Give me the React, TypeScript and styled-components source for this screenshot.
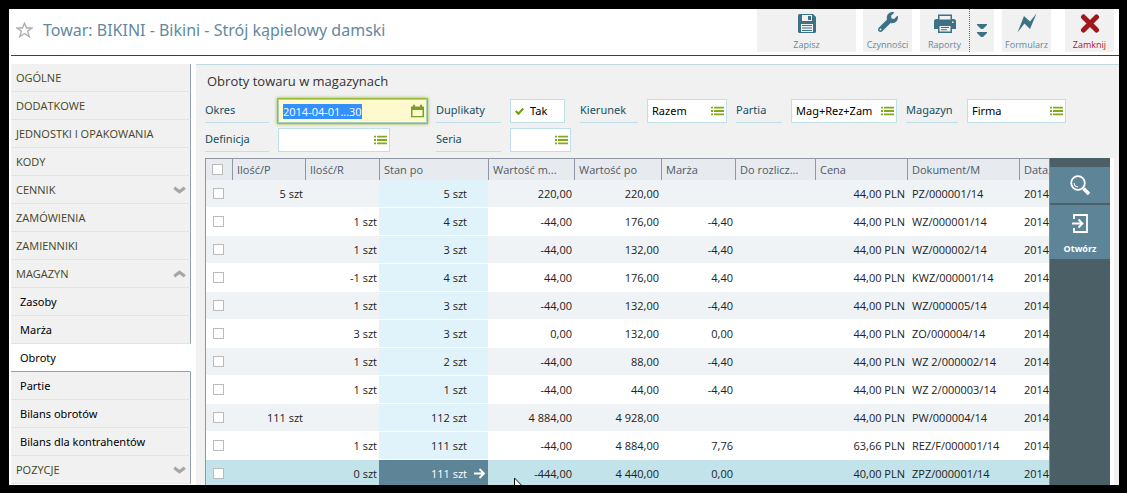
import React, { useEffect, useRef } from 'react';
import styled, { createGlobalStyle, css } from 'styled-components';
import { FaWrench } from 'react-icons/fa';

const GlobalStyle = createGlobalStyle`
  *, *::before, *::after { box-sizing: border-box; }
  body {
    margin: 0;
    background: #000;
    color: #222;
    font: 11px/16px 'Noto Sans', 'Open Sans', sans-serif;
  }
  button, input, select { font: inherit; color: inherit; margin: 0; }
`;

const Frame = styled.div`
  height: 100vh;
  padding: 9px 8px 8px 9px;
  background: #000;
`;

const Window = styled.div`
  display: flex;
  flex-direction: column;
  height: 100%;
  padding-left: 2px;
  background: #fff;
  overflow: hidden;
`;

const Header = styled.header`
  display: flex;
  flex: none;
  align-items: flex-start;
  justify-content: space-between;
  height: 47px;
  padding-right: 5px;
  border-bottom: 1px solid #44441f;
`;

const Heading = styled.div`
  display: flex;
  align-items: center;
  gap: 10px;
  height: 42px;
  padding-left: 5px;
`;

const Title = styled.h1`
  margin: 0;
  color: #6389a0;
  font-size: 16px;
  font-weight: 400;
  line-height: 24px;
  white-space: nowrap;
`;

const IconButton = styled.button`
  display: flex;
  padding: 0;
  border: 0;
  background: none;
`;

const Toolbar = styled.div`
  display: flex;
  height: 43px;
`;

const ToolButton = styled.button<{ $width?: number; $gap?: number; $danger?: boolean; $split?: boolean }>`
  display: flex;
  flex-direction: column;
  align-items: center;
  justify-content: space-between;
  width: ${(p) => p.$width ?? 49}px;
  margin-left: ${(p) => p.$gap ?? 0}px;
  padding: 3px 0 0;
  border: 0;
  border-left: ${(p) => (p.$split ? '1px dotted #3c7186' : '0')};
  background: #f1f1f1;
  color: ${(p) => (p.$danger ? '#b5121b' : '#6389a0')};
  font-family: 'Open Sans', sans-serif;
  font-size: 9px;
  line-height: 14px;
  ${(p) => p.$split && css`justify-content: center; padding-top: 0;`}
`;

const Body = styled.div`
  display: flex;
  flex: 1;
  gap: 5px;
  min-height: 0;
  padding-top: 8px;
`;

const Sidebar = styled.nav`
  flex: none;
  width: 180px;
  overflow: hidden;
`;

const NavLink = styled.a<{ $sub?: boolean; $active?: boolean }>`
  display: flex;
  align-items: center;
  justify-content: space-between;
  height: 28px;
  padding: 0 4px 0 ${(p) => (p.$sub ? 9 : 5)}px;
  border-right: 1px solid ${(p) => (p.$active ? '#fff' : '#94a2a8')};
  border-bottom: 1px solid ${(p) => (p.$active ? '#94a2a8' : '#e4e4e4')};
  background: ${(p) => (p.$active ? '#fff' : '#f1f1f1')};
  color: ${(p) => (p.$sub ? '#000' : '#44441f')};
  font-family: ${(p) => (p.$sub ? 'inherit' : "'Open Sans', sans-serif")};
  text-decoration: none;
`;

const Main = styled.main`
  display: flex;
  flex: 1;
  flex-direction: column;
  min-width: 0;
  padding: 7px 5px 0 9px;
  border-top: 1px solid #c0dae2;
  background: #f1f1f1;
`;

const SectionTitle = styled.h2`
  margin: 0 0 9px 2px;
  color: #333;
  font-family: 'Open Sans', sans-serif;
  font-size: 13px;
  font-weight: 400;
  line-height: 18px;
`;

const Filters = styled.form`
  display: grid;
  grid-template-columns: 64px 149px 65px 61px 58px 80px 46px 106px 52px 99px;
  grid-auto-rows: 24px;
  gap: 5px 9px;
`;

const FilterLabel = styled.label<{ $start?: boolean }>`
  padding-top: 3px;
  border-bottom: 1px solid #bfe0e6;
  color: #145062;
  white-space: nowrap;
  ${(p) => p.$start && css`grid-column-start: 1;`}
`;

const Field = styled.div<{ $width?: number }>`
  position: relative;
  width: ${(p) => (p.$width ? `${p.$width}px` : '100%')};
  color: #000;
`;

const FieldIcon = styled.span`
  position: absolute;
  top: 50%;
  right: 3px;
  display: flex;
  transform: translateY(-50%);
  pointer-events: none;
`;

const Select = styled.select`
  width: 100%;
  height: 24px;
  padding: 0 18px 0 4px;
  border: 1px solid #bfe0e6;
  border-radius: 0;
  outline: 0;
  background: #fff;
  appearance: none;
`;

const DateInput = styled.input`
  width: 100%;
  height: 24px;
  padding: 0 18px 0 4px;
  border: 1px solid #a6cfc0;
  outline: 1px solid #9cbd3c;
  box-shadow: 0 0 3px 1px #8fb42c;
  background: #fff9d0;
  font-family: 'Open Sans', sans-serif;
  &::selection { background: #3390ff; color: #fff; }
`;

const Toggle = styled.label`
  display: flex;
  align-items: center;
  gap: 6px;
  width: 55px;
  padding-left: 4px;
  border: 1px solid #bfe0e6;
  background: #fff;
  color: #000;
`;

const ToggleBox = styled.span`
  position: relative;
  display: flex;
  width: 9px;
  height: 9px;
`;

const ToggleInput = styled.input`
  width: 9px;
  height: 9px;
  appearance: none;
  & + svg { position: absolute; inset: 0; visibility: hidden; pointer-events: none; }
  &:checked + svg { visibility: visible; }
`;

const Content = styled.div`
  display: flex;
  flex: 1;
  min-height: 0;
  margin-top: 6px;
  padding-right: 4px;
  background: #fff;
`;

const TableArea = styled.div`
  flex: 1;
  min-width: 0;
  overflow: hidden;
  border-left: 1px solid #9096a4;
  font-family: 'Open Sans', sans-serif;
`;

const Table = styled.table`
  width: 100%;
  table-layout: fixed;
  border-collapse: separate;
  border-spacing: 0;
`;

const HeadCell = styled.th`
  height: 22px;
  padding: 0 0 0 4px;
  border-top: 1px solid #9096a4;
  border-left: 1px solid #9096a4;
  background: #e7eaef;
  color: #4f5a63;
  font-weight: 400;
  text-align: left;
  overflow: hidden;
  text-overflow: ellipsis;
  white-space: nowrap;
  &:first-child { border-left: 0; }
  &:last-child { text-overflow: clip; }
`;

const Row = styled.tr<{ $selected?: boolean }>`
  background: ${(p) => (p.$selected ? '#c2e3ea' : '#fff')};
  ${(p) => !p.$selected && css`&:nth-child(odd) { background: #eff3f6; }`}
`;

const Cell = styled.td<{ $text?: boolean }>`
  position: relative;
  height: 28px;
  padding: 0 2px 0 ${(p) => (p.$text ? 5 : 0)}px;
  border-bottom: 1px solid #fff;
  text-align: ${(p) => (p.$text ? 'left' : 'right')};
  white-space: nowrap;
`;

const StockCell = styled(Cell)<{ $selected?: boolean }>`
  padding-right: 21px;
  background: ${(p) => (p.$selected ? '#5e8497' : '#e0f3fb')};
  color: ${(p) => (p.$selected ? '#fff' : 'inherit')};
`;

const OpenArrow = styled.svg`
  position: absolute;
  top: 8px;
  right: 2px;
`;

const Pointer = styled.svg`
  position: absolute;
  top: 17px;
  left: 26px;
`;

const Tick = styled.input`
  display: block;
  width: 11px;
  height: 11px;
  border: 1px solid #bbb;
  background: #fff;
  appearance: none;
`;

const TickCell = styled(Cell)`
  padding: 0 0 0 7px;
`;

const TickHead = styled(HeadCell)`
  padding-left: 6px;
`;

const SidePanel = styled.aside`
  display: flex;
  flex: none;
  flex-direction: column;
  gap: 2px;
  width: 61px;
  padding-top: 9px;
  border-left: 1px solid #7d8f97;
  background: #4b5f66;
`;

const SideButton = styled.button<{ $tall?: boolean }>`
  display: flex;
  flex-direction: column;
  align-items: center;
  justify-content: ${(p) => (p.$tall ? 'flex-end' : 'center')};
  gap: 9px;
  height: ${(p) => (p.$tall ? 54 : 36)}px;
  padding: 0 0 ${(p) => (p.$tall ? 3 : 0)}px;
  border: 0;
  background: #5e8497;
  color: #fff;
  font-family: 'Open Sans', sans-serif;
  font-size: 9px;
  font-weight: 700;
  line-height: 14px;
`;

const ListIcon = () => (
  <svg width="13" height="9" viewBox="0 0 13 9" fill="#82a91b" aria-hidden="true">
    <path d="M0 0h2v2H0zM3 0h10v2H3zM0 3.5h2v2H0zM3 3.5h10v2H3zM0 7h2v2H0zM3 7h10v2H3z" />
  </svg>
);

const Chevron = ({ up }: { up?: boolean }) => (
  <svg width="13" height="8" viewBox="0 0 13 8" fill="none" stroke="#a6a6a6" strokeWidth="3" aria-hidden="true">
    <path d={up ? 'M1.200 6.200 6.500 2.200 11.800 6.200' : 'M1.200 1.800 6.500 5.800 11.800 1.800'} />
  </svg>
);

type NavItem = { label: string; sub?: boolean; active?: boolean; arrow?: 'up' | 'down' };

const navItems: NavItem[] = [
  { label: 'OGÓLNE' },
  { label: 'DODATKOWE' },
  { label: 'JEDNOSTKI I OPAKOWANIA' },
  { label: 'KODY' },
  { label: 'CENNIK', arrow: 'down' },
  { label: 'ZAMÓWIENIA' },
  { label: 'ZAMIENNIKI' },
  { label: 'MAGAZYN', arrow: 'up' },
  { label: 'Zasoby', sub: true },
  { label: 'Marża', sub: true },
  { label: 'Obroty', sub: true, active: true },
  { label: 'Partie', sub: true },
  { label: 'Bilans obrotów', sub: true },
  { label: 'Bilans dla kontrahentów', sub: true },
  { label: 'POZYCJE', arrow: 'down' },
];

const columns = [
  { label: 'Ilość/P', width: 73 },
  { label: 'Ilość/R', width: 74 },
  { label: 'Stan po', width: 109 },
  { label: 'Wartość m...', width: 86 },
  { label: 'Wartość po', width: 87 },
  { label: 'Marża', width: 74 },
  { label: 'Do rozlicz...', width: 80 },
  { label: 'Cena', width: 92 },
  { label: 'Dokument/M', width: 112 },
  { label: 'Data,', width: 0 },
];

// in, out, stock after, value, value after, margin, price, document
const rows: string[][] = [
  ['5 szt', '', '5 szt', '220,00', '220,00', '', '44,00 PLN', 'PZ/000001/14'],
  ['', '1 szt', '4 szt', '-44,00', '176,00', '-4,40', '44,00 PLN', 'WZ/000001/14'],
  ['', '1 szt', '3 szt', '-44,00', '132,00', '-4,40', '44,00 PLN', 'WZ/000002/14'],
  ['', '-1 szt', '4 szt', '44,00', '176,00', '4,40', '44,00 PLN', 'KWZ/000001/14'],
  ['', '1 szt', '3 szt', '-44,00', '132,00', '-4,40', '44,00 PLN', 'WZ/000005/14'],
  ['', '3 szt', '3 szt', '0,00', '132,00', '0,00', '44,00 PLN', 'ZO/000004/14'],
  ['', '1 szt', '2 szt', '-44,00', '88,00', '-4,40', '44,00 PLN', 'WZ 2/000002/14'],
  ['', '1 szt', '1 szt', '-44,00', '44,00', '-4,40', '44,00 PLN', 'WZ 2/000003/14'],
  ['111 szt', '', '112 szt', '4 884,00', '4 928,00', '', '44,00 PLN', 'PW/000004/14'],
  ['', '1 szt', '111 szt', '-44,00', '4 884,00', '7,76', '63,66 PLN', 'REZ/F/000001/14'],
  ['', '0 szt', '111 szt', '-444,00', '4 440,00', '0,00', '40,00 PLN', 'ZPZ/000001/14'],
];

type ListFieldProps = { id: string; label: string; value?: string; width?: number; start?: boolean };

const ListField = ({ id, label, value = '', width, start }: ListFieldProps) => (
  <>
    <FilterLabel htmlFor={id} $start={start}>{label}</FilterLabel>
    <Field $width={width}>
      <Select id={id} defaultValue={value}>
        <option value={value}>{value}</option>
      </Select>
      <FieldIcon><ListIcon /></FieldIcon>
    </Field>
  </>
);

export default function App() {
  const period = useRef<HTMLInputElement>(null);

  useEffect(() => {
    period.current?.focus();
    period.current?.select();
  }, []);

  return (
    <>
      <GlobalStyle />
      <Frame>
        <Window>
          <Header>
            <Heading>
              <IconButton type="button" aria-label="Ulubione">
                <svg width="17" height="16" viewBox="0 0 17 16" fill="none" stroke="#adadad" strokeWidth="1.3">
                  <path d="M8.5 1.2 10.5 6h5.3l-4.2 3.3 1.6 5.4-4.7-3.2-4.7 3.2 1.6-5.4L1.2 6h5.3z" />
                </svg>
              </IconButton>
              <Title>Towar: BIKINI - Bikini - Strój kąpielowy damski</Title>
            </Heading>
            <Toolbar>
              <ToolButton type="button" $width={99}>
                <svg width="20" height="22" viewBox="0 0 20 22" aria-hidden="true">
                  <path fill="#3c7186" d="M1 3.5A1.5 1.5 0 0 1 2.500 2H16l3 3v14.500A1.5 1.500 0 0 1 17.500 21h-15A1.500 1.500 0 0 1 1 19.500z" />
                  <path fill="#f1f1f1" d="M5 3h10v6H5zM4 12h12v8H4z" />
                  <path fill="#3c7186" d="M11 4h3v4h-3zM5 13h10v1H5zM5 15.500h10v1H5zM5 18h10v1H5z" />
                </svg>
                Zapisz
              </ToolButton>
              <ToolButton type="button" $gap={7}>
                <FaWrench size={20} color="#3c7186" aria-hidden="true" />
                Czynności
              </ToolButton>
              <ToolButton type="button" $gap={8}>
                <svg width="22" height="22" viewBox="0 0 22 22" aria-hidden="true">
                  <path fill="#3c7186" d="M4 7V2.500h14V7h1.500A2.500 2.500 0 0 1 22 9.500V17h-4v4H4v-4H0V9.500A2.500 2.500 0 0 1 2.500 7z" />
                  <path fill="#f1f1f1" d="M5.500 4h11v3.500h-11zM5.500 14h11v5.500h-11zM18 9.500h1.500V11H18z" />
                  <path fill="#3c7186" d="M7 15h8v1H7zM7 17.200h6v1H7z" />
                </svg>
                Raporty
              </ToolButton>
              <ToolButton type="button" $width={25} $split aria-label="Więcej raportów">
                <svg width="10" height="14" viewBox="0 0 10 14" fill="#3c7186" aria-hidden="true">
                  <path d="M0 0h10v1L6 5H4L0 1zM0 8h10v1l-4 4H4L0 9z" />
                </svg>
              </ToolButton>
              <ToolButton type="button" $gap={8}>
                <svg width="20" height="21" viewBox="0 0 20 21" fill="#3c7186" aria-hidden="true">
                  <path d="M.5 20.500 7 4l6 5.500L19.500 1.500 13 17 7.500 11.500z" />
                </svg>
                Formularz
              </ToolButton>
              <ToolButton type="button" $gap={14} $danger>
                <svg width="20" height="22" viewBox="0 0 20 22" fill="none" stroke="#a0161d" strokeWidth="5" strokeLinecap="round" aria-hidden="true">
                  <path d="M3.500 5 16.500 18M16.500 5 3.500 18" />
                </svg>
                Zamknij
              </ToolButton>
            </Toolbar>
          </Header>
          <Body>
            <Sidebar>
              {navItems.map((item) => (
                <NavLink key={item.label} href="#" $sub={item.sub} $active={item.active}>
                  {item.label}
                  {item.arrow && <Chevron up={item.arrow === 'up'} />}
                </NavLink>
              ))}
            </Sidebar>
            <Main>
              <SectionTitle>Obroty towaru w magazynach</SectionTitle>
              <Filters>
                <FilterLabel htmlFor="okres">Okres</FilterLabel>
                <Field>
                  <DateInput id="okres" ref={period} defaultValue="2014-04-01...30" />
                  <FieldIcon>
                    <svg width="13" height="13" viewBox="0 0 13 13" aria-hidden="true">
                      <path fill="#75a12b" d="M0 2h2V0h2v2h5V0h2v2h2v11H0zM1.500 5.500v6h10v-6z" fillRule="evenodd" />
                    </svg>
                  </FieldIcon>
                </Field>
                <FilterLabel htmlFor="duplikaty">Duplikaty</FilterLabel>
                <Toggle>
                  <ToggleBox>
                    <ToggleInput id="duplikaty" type="checkbox" defaultChecked />
                    <svg width="9" height="9" viewBox="0 0 9 9" fill="none" stroke="#6f9e12" strokeWidth="2.200">
                      <path d="M.8 4 3.500 6.700 8.300 1.500" />
                    </svg>
                  </ToggleBox>
                  Tak
                </Toggle>
                <ListField id="kierunek" label="Kierunek" value="Razem" />
                <ListField id="partia" label="Partia" value="Mag+Rez+Zam" />
                <ListField id="magazyn" label="Magazyn" value="Firma" />
                <ListField id="definicja" label="Definicja" width={112} start />
                <ListField id="seria" label="Seria" />
              </Filters>
              <Content>
                <TableArea>
                  <Table>
                    <colgroup>
                      <col style={{ width: 26 }} />
                      {columns.map((c) => (
                        <col key={c.label} style={c.width ? { width: c.width } : undefined} />
                      ))}
                    </colgroup>
                    <thead>
                      <tr>
                        <TickHead><Tick type="checkbox" aria-label="Zaznacz wszystko" /></TickHead>
                        {columns.map((c) => <HeadCell key={c.label}>{c.label}</HeadCell>)}
                      </tr>
                    </thead>
                    <tbody>
                      {rows.map(([qtyIn, qtyOut, stock, value, valueAfter, margin, price, doc], i) => {
                        const selected = i === rows.length - 1;
                        return (
                          <Row key={doc} $selected={selected}>
                            <TickCell><Tick type="checkbox" aria-label={doc} /></TickCell>
                            <Cell>{qtyIn}</Cell>
                            <Cell>{qtyOut}</Cell>
                            <StockCell $selected={selected}>
                              {stock}
                              {selected && (
                                <OpenArrow width="13" height="11" viewBox="0 0 13 11" fill="none" stroke="#fff" strokeWidth="1.800">
                                  <path d="M1 5.500h9.500M6.500 1 11 5.500 6.500 10" />
                                </OpenArrow>
                              )}
                            </StockCell>
                            <Cell>
                              {value}
                              {selected && (
                                <Pointer width="12" height="19" viewBox="0 0 12 19" fill="#fff" stroke="#111">
                                  <path d="M.5 1v15l3.500-3.300 2.300 5.300 2.200-1-2.300-5h5z" />
                                </Pointer>
                              )}
                            </Cell>
                            <Cell>{valueAfter}</Cell>
                            <Cell>{margin}</Cell>
                            <Cell />
                            <Cell>{price}</Cell>
                            <Cell $text>{doc}</Cell>
                            <Cell $text>2014</Cell>
                          </Row>
                        );
                      })}
                    </tbody>
                  </Table>
                </TableArea>
                <SidePanel>
                  <SideButton type="button" aria-label="Szukaj">
                    <svg width="21" height="21" viewBox="0 0 21 21" fill="none" stroke="#fff" aria-hidden="true">
                      <circle cx="8" cy="8" r="6.800" strokeWidth="1.800" />
                      <path d="M4 8a4 4 0 0 0 4 4" strokeWidth="1" />
                      <path d="m13.500 13.500 5.500 5.500" strokeWidth="3.600" />
                    </svg>
                  </SideButton>
                  <SideButton type="button" $tall>
                    <svg width="18" height="19" viewBox="0 0 18 19" fill="none" stroke="#fff" strokeWidth="1.800" aria-hidden="true">
                      <path d="M3 5V1h13v17H3v-4M1 9.500h10M7.500 5.500l4 4-4 4" />
                    </svg>
                    Otwórz
                  </SideButton>
                </SidePanel>
              </Content>
            </Main>
          </Body>
        </Window>
      </Frame>
    </>
  );
}
